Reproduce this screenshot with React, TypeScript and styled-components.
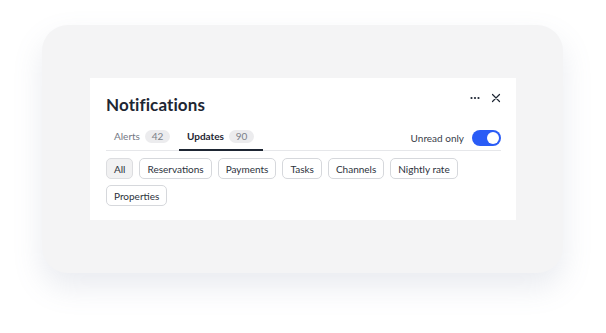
import styled, { createGlobalStyle } from "styled-components";
import { useState } from "react";

const Global = createGlobalStyle`
    body {
        margin: 0;
        background: #ffffff;
        font-family: "Lato", "Liberation Sans", sans-serif;
    }
`;

const Page = styled.div`
    width: 606px;
    height: 333px;
    padding: 25px 0 0 42px;
    box-sizing: border-box;
`;

const Card = styled.div`
    width: 521px;
    height: 248px;
    box-sizing: border-box;
    padding: 53px 0 0 48px;
    background: #f4f4f5;
    border-radius: 26px;
    box-shadow: 0 14px 30px rgba(120, 130, 160, 0.16);
`;

const Panel = styled.div`
    width: 426px;
    height: 142px;
    box-sizing: border-box;
    background: #ffffff;
    padding: 14px 15px 0 16px;
`;

const Header = styled.div`
    display: flex;
    justify-content: space-between;
    align-items: flex-start;
`;

const Title = styled.h2`
    margin: 2px 0 0;
    font-size: 17px;
    font-weight: 700;
    color: #1e2633;
    letter-spacing: 0.1px;
`;

const Actions = styled.div`
    display: flex;
    align-items: center;
    gap: 11px;
    margin-top: 1px;
`;

const IconButton = styled.button`
    border: 0;
    background: none;
    padding: 0;
    display: flex;
    color: #1e2633;
    cursor: pointer;
`;

const TabBar = styled.div`
    display: flex;
    align-items: flex-end;
    justify-content: space-between;
    margin-top: 10px;
    border-bottom: 1px solid #e6e7ea;
`;

const Tabs = styled.div`
    display: flex;
`;

const Tab = styled.div<{ $active?: boolean }>`
    display: flex;
    align-items: center;
    gap: 5px;
    height: 22px;
    padding: 0 9px 2px 8px;
    margin-bottom: -1px;
    font-size: 10px;
    font-weight: ${(p) => (p.$active ? 700 : 400)};
    color: ${(p) => (p.$active ? "#1e2633" : "#737884")};
    border-bottom: 2px solid ${(p) => (p.$active ? "#1e2633" : "transparent")};
`;

const Count = styled.span`
    display: inline-flex;
    align-items: center;
    justify-content: center;
    min-width: 25px;
    height: 13px;
    border-radius: 7px;
    background: #ececee;
    color: #7b7f88;
    font-size: 10px;
    font-weight: 400;
`;

const Unread = styled.label`
    display: flex;
    align-items: center;
    gap: 8px;
    font-size: 10px;
    color: #3a404b;
    padding-bottom: 4px;
`;

const Switch = styled.button<{ $on: boolean }>`
    position: relative;
    width: 29px;
    height: 16px;
    border: 0;
    padding: 0;
    border-radius: 8px;
    background: ${(p) => (p.$on ? "#2a5cf6" : "#cfd2d8")};
    cursor: pointer;

    &::after {
        content: "";
        position: absolute;
        top: 2px;
        left: ${(p) => (p.$on ? "15px" : "2px")};
        width: 12px;
        height: 12px;
        border-radius: 50%;
        background: #ffffff;
    }
`;

const Chips = styled.div`
    display: flex;
    flex-wrap: wrap;
    gap: 6px;
    margin-top: 7px;
`;

const Chip = styled.button<{ $selected?: boolean }>`
    height: 21px;
    padding: 0 7px;
    border-radius: 5px;
    border: 1px solid ${(p) => (p.$selected ? "#dcdde0" : "#d6d8dc")};
    background: ${(p) => (p.$selected ? "#f1f1f2" : "#ffffff")};
    font-family: inherit;
    font-size: 10px;
    color: #2c323c;
    cursor: pointer;
`;

const filters = ["All", "Reservations", "Payments", "Tasks", "Channels", "Nightly rate", "Properties"];

export default function App() {
    const [unread, setUnread] = useState(true);
    const [filter, setFilter] = useState("All");

    return (
        <Page>
            <Global />
            <Card>
                <Panel>
                    <Header>
                        <Title>Notifications</Title>
                        <Actions>
                            <IconButton aria-label="More">
                                <svg width="10" height="10" viewBox="0 0 10 10">
                                    <circle cx="1.5" cy="5" r="1.1" fill="currentColor" />
                                    <circle cx="5" cy="5" r="1.1" fill="currentColor" />
                                    <circle cx="8.5" cy="5" r="1.1" fill="currentColor" />
                                </svg>
                            </IconButton>
                            <IconButton aria-label="Close">
                                <svg width="10" height="10" viewBox="0 0 10 10">
                                    <path d="M1.5 1.5l7 7M8.5 1.5l-7 7" stroke="currentColor" strokeWidth="1.2" strokeLinecap="round" />
                                </svg>
                            </IconButton>
                        </Actions>
                    </Header>
                    <TabBar>
                        <Tabs>
                            <Tab>
                                Alerts <Count>42</Count>
                            </Tab>
                            <Tab $active>
                                Updates <Count>90</Count>
                            </Tab>
                        </Tabs>
                        <Unread>
                            Unread only
                            <Switch $on={unread} onClick={() => setUnread(!unread)} aria-label="Unread only" />
                        </Unread>
                    </TabBar>
                    <Chips>
                        {filters.map((f) => (
                            <Chip key={f} $selected={f === filter} onClick={() => setFilter(f)}>
                                {f}
                            </Chip>
                        ))}
                    </Chips>
                </Panel>
            </Card>
        </Page>
    );
}
